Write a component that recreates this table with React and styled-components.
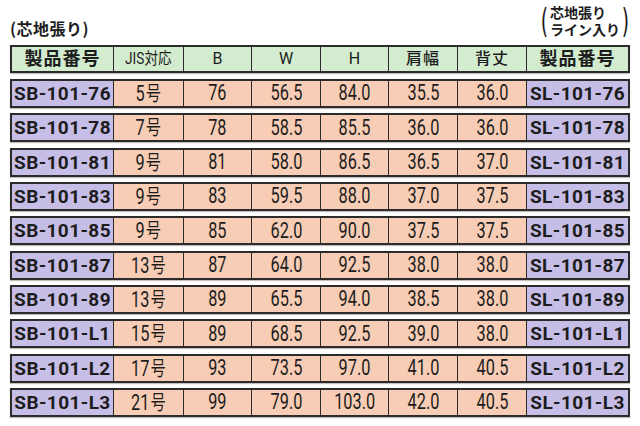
import React from "react";
import styled, { createGlobalStyle } from "styled-components";

const GlobalStyle = createGlobalStyle`
  html, body {
    margin: 0;
    padding: 0;
    background: #ffffff;
  }
  body {
    font-family: Roboto, "Noto Sans CJK JP", sans-serif;
    color: #1c1c1c;
  }
`;

const rows = [
    ["SB-101-76", "5", "76", "56.5", "84.0", "35.5", "36.0", "SL-101-76"],
    ["SB-101-78", "7", "78", "58.5", "85.5", "36.0", "36.0", "SL-101-78"],
    ["SB-101-81", "9", "81", "58.0", "86.5", "36.5", "37.0", "SL-101-81"],
    ["SB-101-83", "9", "83", "59.5", "88.0", "37.0", "37.5", "SL-101-83"],
    ["SB-101-85", "9", "85", "62.0", "90.0", "37.5", "37.5", "SL-101-85"],
    ["SB-101-87", "13", "87", "64.0", "92.5", "38.0", "38.0", "SL-101-87"],
    ["SB-101-89", "13", "89", "65.5", "94.0", "38.5", "38.0", "SL-101-89"],
    ["SB-101-L1", "15", "89", "68.5", "92.5", "39.0", "38.0", "SL-101-L1"],
    ["SB-101-L2", "17", "93", "73.5", "97.0", "41.0", "40.5", "SL-101-L2"],
    ["SB-101-L3", "21", "99", "79.0", "103.0", "42.0", "40.5", "SL-101-L3"],
];

const headers = ["製品番号", "JIS対応", "B", "W", "H", "肩幅", "背丈", "製品番号"];
const headWeight = [700, 400, 400, 400, 400, 500, 500, 700];

const Page = styled.div`
    width: 640px;
    height: 426px;
    overflow: hidden;
    padding: 0 10px;
    box-sizing: border-box;
`;

/* titles above the table */
const TitleBar = styled.div`
    height: 45px;
    display: flex;
    justify-content: space-between;
    align-items: flex-end;
`;

const LeftTitle = styled.div`
    font-family: "Noto Sans CJK JP", sans-serif;
    font-weight: 700;
    font-size: 16px;
    line-height: 16px;
    padding-bottom: 9px;
    letter-spacing: 0.5px;
`;

const RightTitle = styled.div`
    display: flex;
    align-items: center;
    gap: 1px;
    padding-bottom: 7px;
`;

const Paren = styled.span`
    font-family: "DejaVu Sans", sans-serif;
    font-weight: 400;
    font-size: 34px;
    line-height: 34px;
    width: 9px;
    display: flex;
    justify-content: center;
    transform: scaleX(0.55);
`;

const TitleLines = styled.div`
    font-family: "Noto Sans CJK JP", sans-serif;
    font-weight: 700;
    font-size: 14px;
    line-height: 17px;
`;

const Table = styled.div`
    display: flex;
    flex-direction: column;
    gap: 5.33px;
`;

const Row = styled.div`
    display: grid;
    grid-template-columns: 101px 70px 68px 69px 68px 69px 69px 102px;
    height: ${(p) => (p.$head ? "28px" : "29px")};
    margin-bottom: ${(p) => (p.$head ? "0.67px" : "0")};
    border: 2px solid #2b2b2b;
    box-sizing: border-box;
    box-shadow: 0 1px 1px rgba(90, 70, 60, 0.35);
`;

const Cell = styled.div`
    display: flex;
    align-items: center;
    justify-content: center;
    border-left: ${(p) => (p.$first ? "none" : "1.5px solid #2b2b2b")};
    background: ${(p) =>
        p.$head ? "#d3ecd0" : p.$code ? "#c6bee6" : "#f8cdb5"};
`;

const CodeText = styled.span`
    font-family: Roboto, sans-serif;
    font-weight: 700;
    font-size: 19px;
    line-height: 1;
    letter-spacing: 0.4px;
    white-space: nowrap;
`;

const NumText = styled.span`
    display: inline-flex;
    align-items: baseline;
    font-family: Roboto, sans-serif;
    font-size: 22px;
    line-height: 1;
    font-weight: 400;
    transform: scaleX(0.74);
    white-space: nowrap;
`;

const Go = styled.span`
    font-family: "Noto Sans CJK JP", sans-serif;
    font-size: 20px;
    line-height: 1.1;
    margin-left: 2px;
`;

const HeadText = styled.span`
    display: inline-block;
    font-family: Roboto, "Noto Sans CJK JP", sans-serif;
    font-size: ${(p) => (p.$w === 700 ? "18px" : "16px")};
    font-weight: ${(p) => p.$w};
    line-height: 1;
    letter-spacing: ${(p) => (p.$w === 400 ? "0" : "1px")};
    transform: ${(p) => (p.$narrow ? "scaleX(0.85)" : "none")};
    white-space: nowrap;
`;

export default function App() {
    return (
        <Page>
            <GlobalStyle />
            <TitleBar>
                <LeftTitle>(芯地張り)</LeftTitle>
                <RightTitle>
                    <Paren>(</Paren>
                    <TitleLines>
                        芯地張り
                        <br />
                        ライン入り
                    </TitleLines>
                    <Paren>)</Paren>
                </RightTitle>
            </TitleBar>
            <Table>
                <Row $head>
                    {headers.map((h, i) => (
                        <Cell key={i} $head $first={i === 0}>
                            <HeadText $w={headWeight[i]} $narrow={i === 1}>
                                {h}
                            </HeadText>
                        </Cell>
                    ))}
                </Row>
                {rows.map((r) => (
                    <Row key={r[0]}>
                        {r.map((v, i) => {
                            const code = i === 0 || i === 7;
                            return (
                                <Cell key={i} $code={code} $first={i === 0}>
                                    {code ? (
                                        <CodeText>{v}</CodeText>
                                    ) : (
                                        <NumText>
                                            {v}
                                            {i === 1 && <Go>号</Go>}
                                        </NumText>
                                    )}
                                </Cell>
                            );
                        })}
                    </Row>
                ))}
            </Table>
        </Page>
    );
}
